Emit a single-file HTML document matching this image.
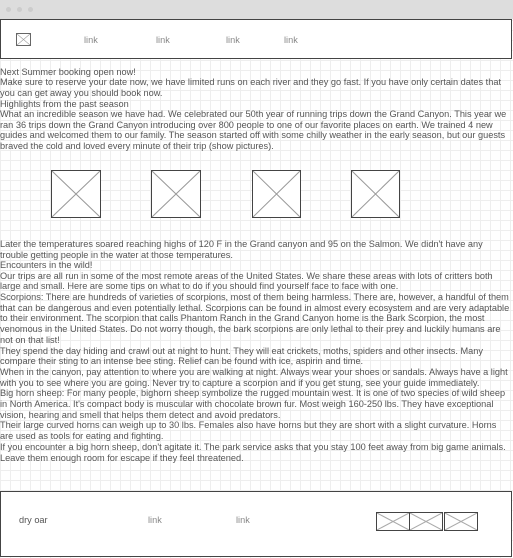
<!DOCTYPE html>
<html><head><style>
*{margin:0;padding:0;box-sizing:border-box}
body{width:513px;height:558px;overflow:hidden;font-family:"Liberation Sans",Arial,sans-serif;font-size:9.2px;color:#555;
background-color:#fff;background-image:linear-gradient(#eee 1px,transparent 1px),linear-gradient(90deg,#eee 1px,transparent 1px);background-size:10px 10px;position:relative}
.bar{position:absolute;left:0;top:0;width:513px;height:19px;background:#ddd}
.dot{position:absolute;top:7px;width:5px;height:5px;border-radius:50%;background:#ccc}
.box{position:absolute;left:0;width:512px;border:1px solid #444;background:#fff}
.ph{position:absolute;border:1px solid #444;background:#fff}
.ph svg{position:absolute;left:0;top:0;width:100%;height:100%}
.lk{position:absolute;color:#888}
.txt{position:absolute;left:0;width:511px}
.txt div{line-height:10.7px}
.txt .h{line-height:10.2px}
</style></head><body>
<div class="bar"><span class="dot" style="left:6px"></span><span class="dot" style="left:17px"></span><span class="dot" style="left:28px"></span></div>
<div class="box" style="top:19px;height:40px">
<div class="ph" style="left:15px;top:13px;width:15px;height:13px;border-color:#666"><svg viewBox="0 0 10 10" preserveAspectRatio="none"><path d="M0 0L10 10M10 0L0 10" stroke="#999" stroke-width=".6" vector-effect="non-scaling-stroke"/></svg></div>
<span class="lk" style="left:83px;top:15px">link</span>
<span class="lk" style="left:155px;top:15px">link</span>
<span class="lk" style="left:225px;top:15px">link</span>
<span class="lk" style="left:283px;top:15px">link</span>
</div>
<div class="txt" style="top:67px">
<div class="h">Next Summer booking open now!</div>
<div>Make sure to reserve your date now, we have limited runs on each river and they go fast. If you have only certain dates that you can get away you should book now.</div>
<div class="h">Highlights from the past season</div>
<div>What an incredible season we have had. We celebrated our 50th year of running trips down the Grand Canyon. This year we ran 36 trips down the Grand Canyon introducing over 800 people to one of our favorite places on earth. We trained 4 new guides and welcomed them to our family. The season started off with some chilly weather in the early season, but our guests braved the cold and loved every minute of their trip (show pictures).</div>
</div>
<div class="ph" style="left:51px;top:170px;width:50px;height:48px"><svg viewBox="0 0 10 10" preserveAspectRatio="none"><path d="M0 0L10 10M10 0L0 10" stroke="#999" stroke-width="1" vector-effect="non-scaling-stroke"/></svg></div>
<div class="ph" style="left:151px;top:170px;width:50px;height:48px"><svg viewBox="0 0 10 10" preserveAspectRatio="none"><path d="M0 0L10 10M10 0L0 10" stroke="#999" stroke-width="1" vector-effect="non-scaling-stroke"/></svg></div>
<div class="ph" style="left:252px;top:170px;width:49px;height:48px"><svg viewBox="0 0 10 10" preserveAspectRatio="none"><path d="M0 0L10 10M10 0L0 10" stroke="#999" stroke-width="1" vector-effect="non-scaling-stroke"/></svg></div>
<div class="ph" style="left:351px;top:170px;width:49px;height:48px"><svg viewBox="0 0 10 10" preserveAspectRatio="none"><path d="M0 0L10 10M10 0L0 10" stroke="#999" stroke-width="1" vector-effect="non-scaling-stroke"/></svg></div>
<div class="txt" style="top:239px">
<div>Later the temperatures soared reaching highs of 120 F in the Grand canyon and 95 on the Salmon. We didn't have any trouble getting people in the water at those temperatures.</div>
<div class="h">Encounters in the wild!</div>
<div>Our trips are all run in some of the most remote areas of the United States. We share these areas with lots of critters both large and small. Here are some tips on what to do if you should find yourself face to face with one.</div>
<div>Scorpions: There are hundreds of varieties of scorpions, most of them being harmless. There are, however, a handful of them that can be dangerous and even potentially lethal. Scorpions can be found in almost every ecosystem and are very adaptable to their environment. The scorpion that calls Phantom Ranch in the Grand Canyon home is the Bark Scorpion, the most venomous in the United States. Do not worry though, the bark scorpions are only lethal to their prey and luckily humans are not on that list!</div>
<div>They spend the day hiding and crawl out at night to hunt. They will eat crickets, moths, spiders and other insects. Many compare their sting to an intense bee sting. Relief can be found with ice, aspirin and time.</div>
<div>When in the canyon, pay attention to where you are walking at night. Always wear your shoes or sandals. Always have a light with you to see where you are going. Never try to capture a scorpion and if you get stung, see your guide immediately.</div>
<div>Big horn sheep: For many people, bighorn sheep symbolize the rugged mountain west. It is one of two species of wild sheep in North America. It's compact body is muscular with chocolate brown fur. Most weigh 160-250 lbs. They have exceptional vision, hearing and smell that helps them detect and avoid predators.</div>
<div>Their large curved horns can weigh up to 30 lbs. Females also have horns but they are short with a slight curvature. Horns are used as tools for eating and fighting.</div>
<div>If you encounter a big horn sheep, don't agitate it. The park service asks that you stay 100 feet away from big game animals. Leave them enough room for escape if they feel threatened.</div>
</div>
<div class="box" style="top:491px;height:66px">
<span style="position:absolute;left:18px;top:23px">dry oar</span>
<span class="lk" style="left:147px;top:23px">link</span>
<span class="lk" style="left:235px;top:23px">link</span>
<div class="ph" style="left:375px;top:20px;width:34px;height:19px"><svg viewBox="0 0 10 10" preserveAspectRatio="none"><path d="M0 0L10 10M10 0L0 10" stroke="#aaa" stroke-width="1" vector-effect="non-scaling-stroke"/></svg></div>
<div class="ph" style="left:408px;top:20px;width:34px;height:19px"><svg viewBox="0 0 10 10" preserveAspectRatio="none"><path d="M0 0L10 10M10 0L0 10" stroke="#aaa" stroke-width="1" vector-effect="non-scaling-stroke"/></svg></div>
<div class="ph" style="left:443px;top:20px;width:34px;height:19px"><svg viewBox="0 0 10 10" preserveAspectRatio="none"><path d="M0 0L10 10M10 0L0 10" stroke="#aaa" stroke-width="1" vector-effect="non-scaling-stroke"/></svg></div>
</div>
</body></html>
